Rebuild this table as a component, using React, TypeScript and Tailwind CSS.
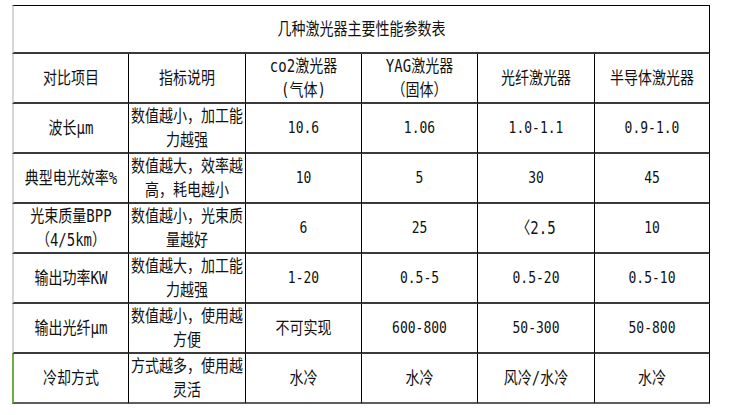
const FONT = "[font-family:'DejaVu_Sans_Mono','Noto_Sans_CJK_SC',monospace]";

type Cell = string[];

const header: Cell[] = [
  ["对比项目"],
  ["指标说明"],
  ["co2激光器", "(气体)"],
  ["YAG激光器", "（固体）"],
  ["光纤激光器"],
  ["半导体激光器"],
];

const rows: Cell[][] = [
  [["波长μm"], ["数值越小，加工能", "力越强"], ["10.6"], ["1.06"], ["1.0-1.1"], ["0.9-1.0"]],
  [["典型电光效率%"], ["数值越大，效率越", "高，耗电越小"], ["10"], ["5"], ["30"], ["45"]],
  [["光束质量BPP", "（4/5km）"], ["数值越小，光束质", "量越好"], ["6"], ["25"], ["〈2.5"], ["10"]],
  [["输出功率KW"], ["数值越大，加工能", "力越强"], ["1-20"], ["0.5-5"], ["0.5-20"], ["0.5-10"]],
  [["输出光纤μm"], ["数值越小，使用越", "方便"], ["不可实现"], ["600-800"], ["50-300"], ["50-800"]],
  [["冷却方式"], ["方式越多，使用越", "灵活"], ["水冷"], ["水冷"], ["风冷/水冷"], ["水冷"]],
];

function Lines({ lines }: { lines: Cell }) {
  return (
    <div className="inline-block scale-y-[1.2] text-center leading-[20px]">
      {lines.map((l, i) => (
        <div key={i} className={/^[\x00-\x7f]+$/.test(l) ? "text-[13px]" : "text-[14px]"}>
          {l}
        </div>
      ))}
    </div>
  );
}

export default function App() {
  return (
    <div className={`min-h-[415px] w-[754px] bg-white pt-[5px] text-[#111] ${FONT}`}>
      <div className="ml-[12px] grid w-[698px] grid-cols-[117px_117px_116px_116px_117px_115px]">
        <div className="col-span-6 flex h-[49px] items-center justify-center border-t border-r border-b-2 border-l-2 border-t-black border-r-black border-b-[#3a3a3a] border-l-[#d6d6d6]">
          <Lines lines={["几种激光器主要性能参数表"]} />
        </div>

        {header.map((c, j) => (
          <div
            key={j}
            className={`flex h-[50px] items-center justify-center border-r border-b-2 border-r-black border-b-[#3a3a3a] ${
              j === 0 ? "border-l-2 border-l-[#d6d6d6]" : ""
            }`}
          >
            <Lines lines={c} />
          </div>
        ))}

        {rows.map((r, i) =>
          r.map((c, j) => (
            <div
              key={`${i}-${j}`}
              className={`flex h-[50px] items-center justify-center border-r border-b-2 border-r-black ${
                i === rows.length - 1 ? "border-b-[#5e5e5e]" : "border-b-[#3a3a3a]"
              } ${
                j === 0
                  ? i === rows.length - 1
                    ? "border-l-2 border-l-[#70ad47]"
                    : "border-l-2 border-l-[#d6d6d6]"
                  : ""
              }`}
            >
              <Lines lines={c} />
            </div>
          ))
        )}
      </div>
    </div>
  );
}
